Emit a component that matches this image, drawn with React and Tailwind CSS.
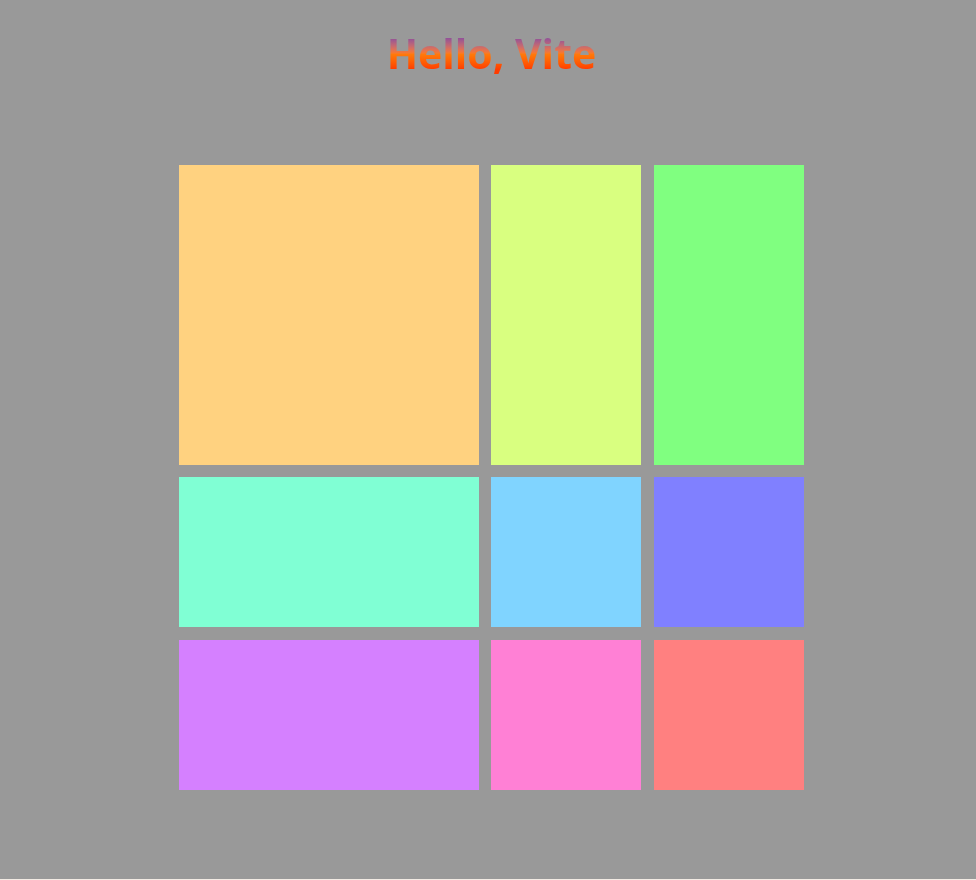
import React from 'react';

const tiles = [
  'bg-[#ffd280]',
  'bg-[#d9ff80]',
  'bg-[#80ff80]',
  'bg-[#80ffd4]',
  'bg-[#80d4ff]',
  'bg-[#8080ff]',
  'bg-[#d580ff]',
  'bg-[#ff80d5]',
  'bg-[#ff8080]',
];

export default function App() {
  return (
    <div className="w-[976px] h-[880px] flex flex-col bg-[#f2ebe4]">
      <div className="h-[879px] bg-[#999999] pl-[6.8px] flex flex-col items-center">
        <h1 className="mt-[26px] text-[41px] leading-[54px] font-bold font-['Open_Sans',sans-serif] bg-gradient-to-b from-[#7a3fa8] from-[15%] via-[#ff7a0a] via-[52%] to-[#ff3c00] to-[80%] bg-clip-text text-transparent">
          Hello, Vite
        </h1>
        <div className="mt-[85px] grid grid-cols-[300px_150px_150px] grid-rows-[300px_150px_150px] gap-[12.4px]">
          {tiles.map((color, i) => (
            <div key={i} className={color} />
          ))}
        </div>
      </div>
    </div>
  );
}
